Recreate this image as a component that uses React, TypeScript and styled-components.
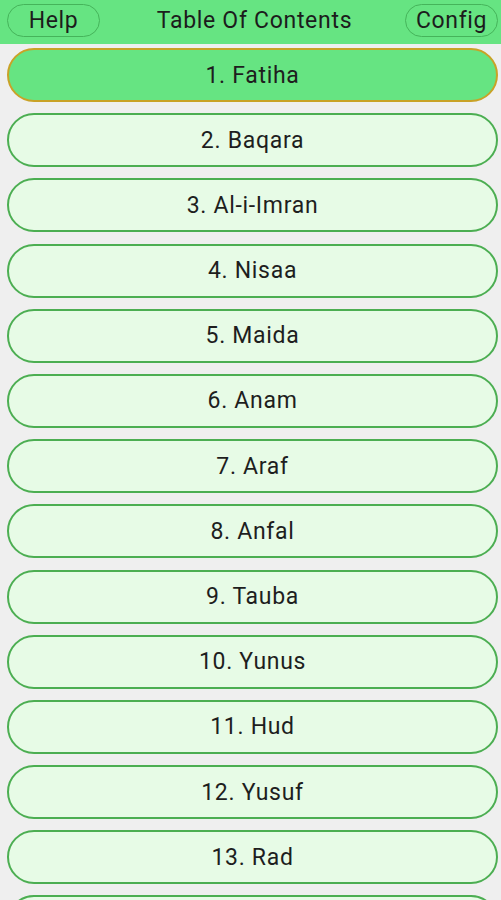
import React from "react";
import styled, { createGlobalStyle } from "styled-components";

const GlobalStyle = createGlobalStyle`
  html, body {
    margin: 0;
    padding: 0;
    background: #efefef;
    font-family: Roboto, "Noto Sans", "Liberation Sans", sans-serif;
  }
`;

const chapters = [
  "Fatiha",
  "Baqara",
  "Al-i-Imran",
  "Nisaa",
  "Maida",
  "Anam",
  "Araf",
  "Anfal",
  "Tauba",
  "Yunus",
  "Hud",
  "Yusuf",
  "Rad",
  "Ibrahim",
];

function App() {
  const selected = 0;
  return (
    <Page>
      <GlobalStyle />
      <Header>
        <HeaderButton>Help</HeaderButton>
        <Title>Table Of Contents</Title>
        <HeaderButton>Config</HeaderButton>
      </Header>
      <List>
        {chapters.map((name, i) => (
          <Chapter key={name} $active={i === selected}>
            {i + 1}. {name}
          </Chapter>
        ))}
      </List>
    </Page>
  );
}

export default App;

const Page = styled.div`
  width: 501px;
  height: 900px;
  overflow: hidden;
  background: #efefef;
`;

const Header = styled.header`
  height: 44px;
  box-sizing: border-box;
  padding: 4px 3px 7px 7px;
  background: #66e482;
  display: flex;
  align-items: center;
  justify-content: space-between;
`;

const HeaderButton = styled.button`
  height: 33px;
  min-width: 93px;
  padding: 0 6px;
  box-sizing: border-box;
  border: 1.5px solid #45b45a;
  border-radius: 17px;
  background: transparent;
  color: #1c1c1c;
  font-family: inherit;
  font-size: 23px;
  letter-spacing: 0.6px;
  line-height: 1;
`;

const Title = styled.h1`
  margin: 0;
  font-size: 23px;
  font-weight: 400;
  letter-spacing: 0.7px;
  color: #1c1c1c;
  padding-left: 4px;
`;

const List = styled.div`
  display: flex;
  flex-direction: column;
  gap: 11.2px;
  padding: 4px 3px 0 7px;
`;

const Chapter = styled.div<{ $active: boolean }>`
  height: 54px;
  box-sizing: border-box;
  border-radius: 27px;
  display: flex;
  align-items: center;
  justify-content: center;
  font-size: 23px;
  letter-spacing: 0.7px;
  color: #1e1e1e;
  background: ${(p) => (p.$active ? "#66e482" : "#e7fbe6")};
  border: ${(p) => (p.$active ? "2px solid #c9a227" : "2.5px solid #4cae52")};
`;
